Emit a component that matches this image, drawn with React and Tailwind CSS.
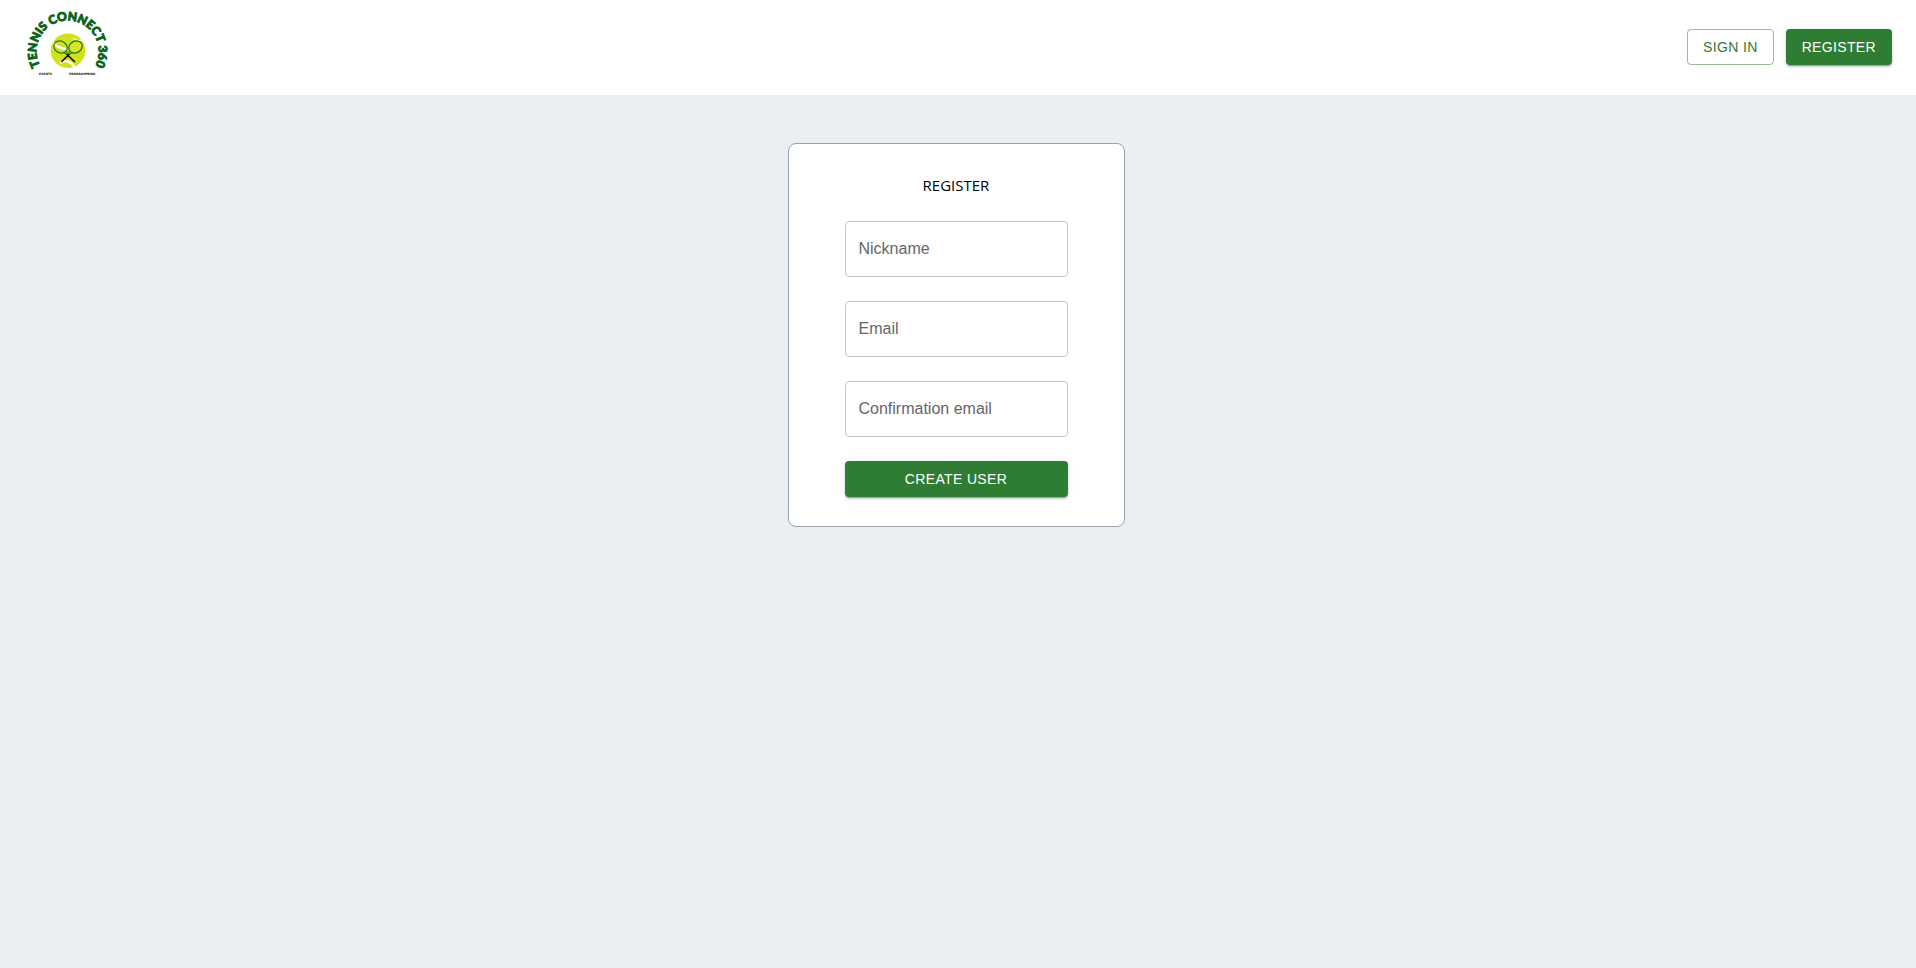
import { useState } from "react";

const FIELDS = [
  { name: "nickname", label: "Nickname", type: "text" },
  { name: "email", label: "Email", type: "email" },
  { name: "confirmEmail", label: "Confirmation email", type: "email" },
];

function Logo() {
  return (
    <svg width="88" height="84" viewBox="24 5 88 84" role="img" aria-label="Tennis Connect 360">
      <defs>
        <path id="logo-circle" d="M 67.6 82.5 A 31 31 0 0 1 67.6 20.5 A 31 31 0 0 1 67.6 82.5" />
        <clipPath id="logo-ball">
          <circle cx="68" cy="50.7" r="17.3" />
        </clipPath>
      </defs>
      <text
        fill="#0b6318"
        stroke="#0b6318"
        strokeWidth="0.9"
        textAnchor="middle"
        className="font-['Lato',sans-serif] text-[12px] font-black"
      >
        <textPath href="#logo-circle" startOffset="50%">TENNIS CONNECT 360</textPath>
      </text>

      <circle cx="68" cy="50.7" r="17.3" fill="#d3e01c" />
      <g clipPath="url(#logo-ball)" fill="none" stroke="#fff">
        <path d="M51 41 C56 46 60 49 67 49" strokeWidth="2.4" />
        <path d="M60 63 C66 59 72 62 75 68" strokeWidth="2.2" />
        <path d="M73 38 C77 41 81 41 85 40" strokeWidth="1" />
      </g>

      {/* rackets */}
      <g fill="none" strokeLinecap="round">
        <path d="M71.5 50.5 L80 42 M73.5 52 L81.5 44 M70.5 47.5 L77 41" stroke="#f4f7b8" strokeWidth="0.6" />
        <ellipse cx="60.5" cy="47" rx="7" ry="5.8" transform="rotate(28 60.5 47)" stroke="#1d7a1f" strokeWidth="1.2" />
        <ellipse cx="75.5" cy="47" rx="7" ry="5.8" transform="rotate(-28 75.5 47)" stroke="#1d7a1f" strokeWidth="1.2" />
        <path d="M66.5 50.5 L67.5 54.5 L64 53 M69.5 50.5 L68.5 54.5 L72 53" stroke="#1d7a1f" strokeWidth="1" />
        <path d="M69 54.5 L61.8 61.5 M67 54.5 L74.4 61.5" stroke="#111" strokeWidth="1.7" />
      </g>

      <g fill="#111" className="font-['DejaVu_Sans',sans-serif] text-[3px] font-bold">
        <text x="39" y="75">EVENTS</text>
        <text x="69" y="75">PROGRAMMING</text>
      </g>
    </svg>
  );
}

export default function App() {
  const [form, setForm] = useState({ nickname: "", email: "", confirmEmail: "" });

  const handleChange = (e) => {
    const { name, value } = e.target;
    setForm((prev) => ({ ...prev, [name]: value }));
  };

  return (
    <div className="min-h-screen bg-[#ebeff2] font-['Liberation_Sans',Arial,sans-serif]">
      <header className="flex items-center justify-between bg-white px-6 pt-[5px] pb-1.5">
        <a href="#home">
          <Logo />
        </a>
        <nav className="flex items-center gap-3">
          <button
            type="button"
            className="rounded border border-[#2e7d32]/50 px-[15px] py-[5px] text-sm leading-6 tracking-wide text-[#2e7d32] hover:border-[#2e7d32]"
          >
            SIGN IN
          </button>
          <button
            type="button"
            className="rounded bg-[#2e7d32] px-4 py-1.5 text-sm leading-6 tracking-wide text-white shadow-[0_3px_1px_-2px_rgba(0,0,0,0.2),0_2px_2px_0_rgba(0,0,0,0.14),0_1px_5px_0_rgba(0,0,0,0.12)] hover:bg-[#1b5e20]"
          >
            REGISTER
          </button>
        </nav>
      </header>

      <main className="flex justify-center pt-12 pr-5 pb-12 pl-4">
        <form
          onSubmit={(e) => e.preventDefault()}
          className="flex flex-col gap-6 rounded-lg border border-gray-400 bg-white px-14 py-[29px]"
        >
          <h1 className="text-center font-['Open_Sans','Noto_Sans',sans-serif] text-[15px] leading-6 text-black">
            REGISTER
          </h1>
          {FIELDS.map((f) => (
            <div key={f.name} className="relative">
              <input
                id={f.name}
                name={f.name}
                type={f.type}
                value={form[f.name]}
                onChange={handleChange}
                className="peer block h-14 w-[223px] rounded border border-[#c4c4c4] px-[13px] text-base text-black/90 outline-none focus:border-[#2e7d32]"
              />
              {/* label sits in the empty box and moves onto the border once there is a value */}
              <label
                htmlFor={f.name}
                className={`pointer-events-none absolute bg-white peer-focus:-top-2 peer-focus:left-2.5 peer-focus:px-1 peer-focus:text-xs peer-focus:text-[#2e7d32] ${
                  form[f.name] ? "-top-2 left-2.5 px-1 text-xs text-[#666]" : "top-4 left-3.5 text-base text-[#666]"
                }`}
              >
                {f.label}
              </label>
            </div>
          ))}
          <button
            type="submit"
            className="rounded bg-[#2e7d32] px-4 py-1.5 text-sm leading-6 tracking-wide text-white shadow-[0_3px_1px_-2px_rgba(0,0,0,0.2),0_2px_2px_0_rgba(0,0,0,0.14),0_1px_5px_0_rgba(0,0,0,0.12)] hover:bg-[#1b5e20]"
          >
            CREATE USER
          </button>
        </form>
      </main>
    </div>
  );
}
